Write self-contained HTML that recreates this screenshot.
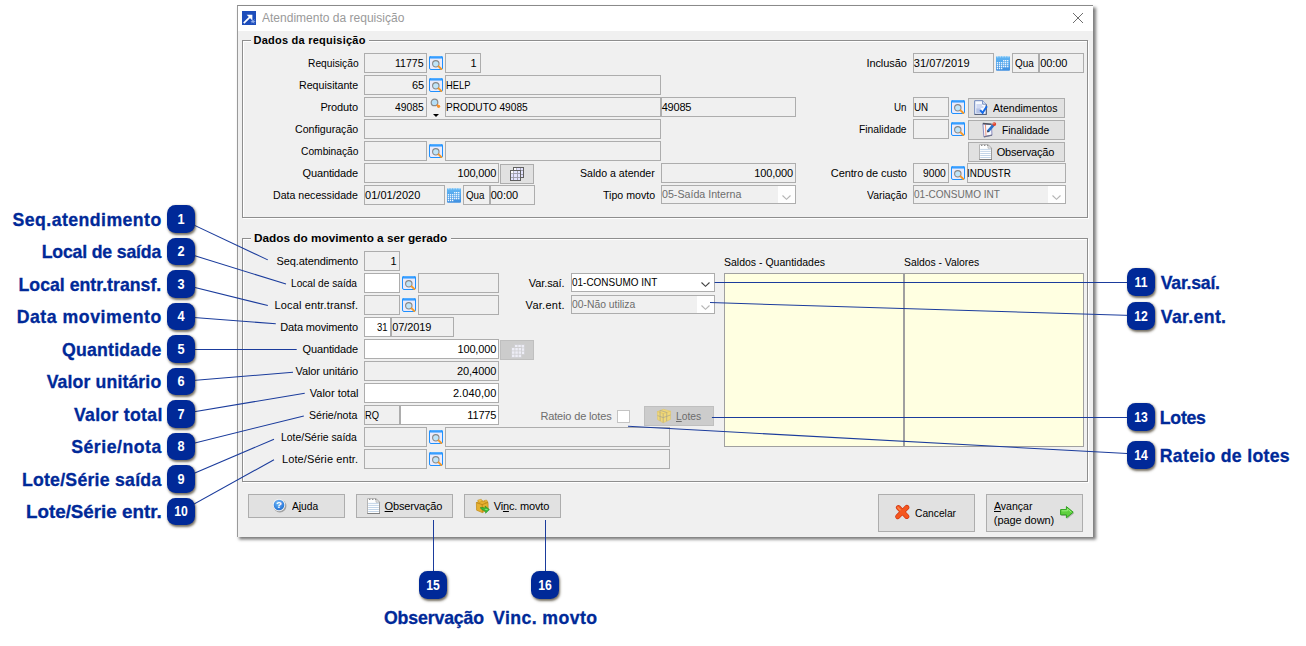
<!DOCTYPE html>
<html lang="pt-BR"><head><meta charset="utf-8"><title>Atendimento da requisição</title>
<style>
html,body{margin:0;padding:0;}
body{width:1306px;height:646px;position:relative;overflow:hidden;background:#fff;font-family:"Liberation Sans", sans-serif;font-size:11px;color:#000;}
.b{position:absolute;box-sizing:border-box;}
.t{position:absolute;white-space:pre;}
svg{position:absolute;overflow:visible;}
u{text-decoration:underline;text-decoration-skip-ink:none;text-underline-offset:1px;}
</style></head>
<body>
<div class="b" style="left:237px;top:5px;width:856px;height:532px;background:#f0f0f0;border-top:1px solid #8a8a8a;border-left:1px solid #9a9a9a;box-shadow:2.5px 2px 3px 0.5px rgba(0,0,0,0.52);"></div>
<div class="b" style="left:238px;top:6px;width:855px;height:25px;background:#fff;"></div>
<svg style="left:242px;top:11px" width="14" height="14" viewBox="0 0 14 14"><rect width="14" height="14" fill="#1d4dbb"/><path d="M1.8 12.2 L8.6 5.4" stroke="#fff" stroke-width="1.7"/><path d="M4.6 3.8 H10.4 V9.6 Z" fill="#fff"/><path d="M9.6 8.4l2.6 4M12.4 8.6l-2.8 3.6M8.8 10.6h4.4" stroke="#9db7ee" stroke-width="0.8"/></svg>
<span class="t" style="top:8.3px;height:20px;line-height:20px;font-size:12.5px;color:#9a9a9a;transform:scaleX(0.9618);transform-origin:0 50%;left:262.2px;">Atendimento da requisição</span>
<svg style="left:1073px;top:13px" width="10" height="10" viewBox="0 0 10 10"><path d="M0 0 L10 10 M10 0 L0 10" stroke="#6e6e6e" stroke-width="1"/></svg>
<div class="b" style="left:242px;top:40px;width:846px;height:178px;border:1px solid #8e8e8e;box-shadow:inset 1px 1px 0 #fff, 1px 1px 0 #fff;"></div>
<div class="b" style="left:251px;top:34px;width:118.2px;height:14px;background:#f0f0f0;"></div>
<span class="t" style="top:29.6px;height:20px;line-height:20px;font-weight:bold;left:253.5px;letter-spacing:0.241px;">Dados da requisição</span>
<span class="t" style="top:53px;height:20px;line-height:20px;transform:scaleX(0.9300);transform-origin:0 50%;left:307.5px;">Requisição</span>
<div class="b" style="left:364px;top:53px;width:63px;height:20px;background:#f0f0f0;border:1px solid #adadad;"></div>
<span class="t" style="top:53px;height:20px;line-height:20px;transform:scaleX(0.9611);transform-origin:0 50%;left:395.4px;">11775</span>
<svg style="left:429px;top:56px" width="14" height="14" viewBox="0 0 14 14"><rect x="0.5" y="0.5" width="13" height="13" rx="1.5" fill="#ebebfa" stroke="#1e90ff"/><rect x="0.3" y="0" width="13.4" height="2.4" rx="1" fill="#2394ff"/><path d="M1.5 0.8h11" stroke="#7cc0ff" stroke-width="0.8"/><circle cx="6.8" cy="7.8" r="3.2" fill="#bfe4f8" stroke="#878787" stroke-width="1.1"/><path d="M9.6 10.4 L12.3 13" stroke="#f39a2b" stroke-width="2" stroke-linecap="round"/></svg>
<div class="b" style="left:445px;top:53px;width:36px;height:20px;background:#f0f0f0;border:1px solid #adadad;"></div>
<span class="t" style="top:53px;height:20px;line-height:20px;left:470.4px;">1</span>
<span class="t" style="top:53px;height:20px;line-height:20px;left:866.4px;letter-spacing:-0.065px;">Inclusão</span>
<div class="b" style="left:913px;top:53px;width:81px;height:20px;background:#f0f0f0;border:1px solid #adadad;"></div>
<span class="t" style="top:53px;height:20px;line-height:20px;left:913.7px;letter-spacing:0.096px;">31/07/2019</span>
<svg style="left:996px;top:56px" width="14" height="15" viewBox="0 0 14 15"><defs><linearGradient id="cg" x1="0" y1="0" x2="0" y2="1"><stop offset="0" stop-color="#63b8f5"/><stop offset="1" stop-color="#3f8fe0"/></linearGradient></defs><rect x="0" y="0.3" width="14" height="14.5" rx="1" fill="url(#cg)"/><path d="M1 0.8h1.4M3.6 0.8h1.4M6.2 0.8h1.4M8.8 0.8h1.4M11.4 0.8h1.4" stroke="#cfe9fb" stroke-width="1"/><rect x="7.1" y="4.0" width="1.3" height="1.3" fill="#fff" opacity="0.95"/><rect x="9.0" y="4.0" width="1.3" height="1.3" fill="#fff" opacity="0.95"/><rect x="11.1" y="4.0" width="1.3" height="1.3" fill="#fff" opacity="0.95"/><rect x="0.8" y="6.1" width="1.3" height="1.3" fill="#fff" opacity="0.95"/><rect x="2.9" y="6.1" width="1.3" height="1.3" fill="#fff" opacity="0.95"/><rect x="5.0" y="6.1" width="1.3" height="1.3" fill="#fff" opacity="0.95"/><rect x="7.1" y="6.1" width="1.3" height="1.3" fill="#fff" opacity="0.95"/><rect x="9.0" y="6.1" width="1.3" height="1.3" fill="#fff" opacity="0.95"/><rect x="11.1" y="6.1" width="1.3" height="1.3" fill="#fff" opacity="0.95"/><rect x="0.8" y="8.1" width="1.3" height="1.3" fill="#fff" opacity="0.95"/><rect x="2.9" y="8.1" width="1.3" height="1.3" fill="#fff" opacity="0.95"/><rect x="5.0" y="8.1" width="1.3" height="1.3" fill="#fff" opacity="0.95"/><rect x="7.1" y="8.1" width="1.3" height="1.3" fill="#fff" opacity="0.95"/><rect x="9.0" y="8.1" width="1.3" height="1.3" fill="#fff" opacity="0.95"/><rect x="11.1" y="8.1" width="1.3" height="1.3" fill="#fff" opacity="0.95"/><rect x="0.8" y="10.0" width="1.3" height="1.3" fill="#fff" opacity="0.95"/><rect x="2.9" y="10.0" width="1.3" height="1.3" fill="#fff" opacity="0.95"/><rect x="5.0" y="10.0" width="1.3" height="1.3" fill="#fff" opacity="0.95"/><rect x="7.1" y="10.0" width="1.3" height="1.3" fill="#fff" opacity="0.95"/><rect x="9.0" y="10.0" width="1.3" height="1.3" fill="#fff" opacity="0.95"/><rect x="11.1" y="10.0" width="1.3" height="1.3" fill="#fff" opacity="0.95"/><rect x="0.8" y="11.9" width="1.3" height="1.3" fill="#fff" opacity="0.95"/><rect x="2.9" y="11.9" width="1.3" height="1.3" fill="#fff" opacity="0.95"/><rect x="5.0" y="11.9" width="1.3" height="1.3" fill="#fff" opacity="0.95"/></svg>
<div class="b" style="left:1012px;top:53px;width:27px;height:20px;background:#f0f0f0;border:1px solid #adadad;"></div>
<span class="t" style="top:53px;height:20px;line-height:20px;transform:scaleX(0.9043);transform-origin:0 50%;left:1014.8px;">Qua</span>
<div class="b" style="left:1039px;top:53px;width:45px;height:20px;background:#f0f0f0;border:1px solid #adadad;"></div>
<span class="t" style="top:53px;height:20px;line-height:20px;left:1040.2px;letter-spacing:-0.077px;">00:00</span>
<span class="t" style="top:75px;height:20px;line-height:20px;transform:scaleX(0.9683);transform-origin:0 50%;left:298.9px;">Requisitante</span>
<div class="b" style="left:364px;top:75px;width:63px;height:20px;background:#f0f0f0;border:1px solid #adadad;"></div>
<span class="t" style="top:75px;height:20px;line-height:20px;left:412px;letter-spacing:-0.218px;">65</span>
<svg style="left:429px;top:78px" width="14" height="14" viewBox="0 0 14 14"><rect x="0.5" y="0.5" width="13" height="13" rx="1.5" fill="#ebebfa" stroke="#1e90ff"/><rect x="0.3" y="0" width="13.4" height="2.4" rx="1" fill="#2394ff"/><path d="M1.5 0.8h11" stroke="#7cc0ff" stroke-width="0.8"/><circle cx="6.8" cy="7.8" r="3.2" fill="#bfe4f8" stroke="#878787" stroke-width="1.1"/><path d="M9.6 10.4 L12.3 13" stroke="#f39a2b" stroke-width="2" stroke-linecap="round"/></svg>
<div class="b" style="left:445px;top:75px;width:216px;height:20px;background:#f0f0f0;border:1px solid #adadad;"></div>
<span class="t" style="top:75px;height:20px;line-height:20px;transform:scaleX(0.8522);transform-origin:0 50%;left:445.6px;">HELP</span>
<span class="t" style="top:97px;height:20px;line-height:20px;left:320.4px;letter-spacing:-0.135px;">Produto</span>
<div class="b" style="left:364px;top:97px;width:63px;height:20px;background:#f0f0f0;border:1px solid #adadad;"></div>
<span class="t" style="top:97px;height:20px;line-height:20px;transform:scaleX(0.9353);transform-origin:0 50%;left:395.4px;">49085</span>
<svg style="left:429px;top:96px" width="14" height="22" viewBox="0 0 14 22"><circle cx="5.5" cy="6.4" r="3.3" fill="#b4def6" stroke="#8a8a8a" stroke-width="1.2"/><path d="M7.8 8.7 L9.6 10.3" stroke="#f7902a" stroke-width="1.7"/><circle cx="9.6" cy="10.3" r="1.6" fill="#f7902a"/><path d="M4 18 L10 18 L7 21 Z" fill="#000"/></svg>
<div class="b" style="left:445px;top:97px;width:216px;height:20px;background:#f0f0f0;border:1px solid #adadad;"></div>
<span class="t" style="top:97px;height:20px;line-height:20px;transform:scaleX(0.9238);transform-origin:0 50%;left:445.6px;">PRODUTO 49085</span>
<div class="b" style="left:661px;top:97px;width:135px;height:20px;background:#f0f0f0;border:1px solid #adadad;"></div>
<span class="t" style="top:97px;height:20px;line-height:20px;left:661.7px;letter-spacing:-0.218px;">49085</span>
<span class="t" style="top:97px;height:20px;line-height:20px;transform:scaleX(0.8893);transform-origin:0 50%;left:894.4px;">Un</span>
<div class="b" style="left:913px;top:97px;width:36px;height:20px;background:#f0f0f0;border:1px solid #adadad;"></div>
<span class="t" style="top:97px;height:20px;line-height:20px;transform:scaleX(0.8906);transform-origin:0 50%;left:913.7px;">UN</span>
<svg style="left:951px;top:100px" width="14" height="14" viewBox="0 0 14 14"><rect x="0.5" y="0.5" width="13" height="13" rx="1.5" fill="#ebebfa" stroke="#1e90ff"/><rect x="0.3" y="0" width="13.4" height="2.4" rx="1" fill="#2394ff"/><path d="M1.5 0.8h11" stroke="#7cc0ff" stroke-width="0.8"/><circle cx="6.8" cy="7.8" r="3.2" fill="#bfe4f8" stroke="#878787" stroke-width="1.1"/><path d="M9.6 10.4 L12.3 13" stroke="#f39a2b" stroke-width="2" stroke-linecap="round"/></svg>
<div class="b" style="left:968px;top:98px;width:97px;height:20px;background:#e1e1e1;border:1px solid #adadad;"></div>
<svg style="left:974px;top:100px" width="14" height="15" viewBox="0 0 14 15"><path d="M0.7 0.7 H8.6 L12.2 4.2 V14.3 H0.7 Z" fill="#f7faff" stroke="#6a84bc" stroke-width="1"/><path d="M0.5 14.5 H12.6 M12.4 4.4 V14.6" stroke="#525c70" stroke-width="0.9"/><path d="M8.6 0.7 V4.2 H12.2" fill="#dfe8f8" stroke="#6a84bc" stroke-width="0.9"/><path d="M2.4 5h5.6M2.4 7h7" stroke="#9fb2e2" stroke-width="0.9"/><rect x="2.2" y="8.2" width="4.4" height="5" fill="#b4c2e6"/><path d="M6.2 10.2 L8.6 12.9 L12.9 6.3" fill="none" stroke="#166ae6" stroke-width="2"/></svg>
<span class="t" style="top:98px;height:20px;line-height:20px;transform:scaleX(0.9578);transform-origin:0 50%;left:993px;">Atendimentos</span>
<span class="t" style="top:119px;height:20px;line-height:20px;transform:scaleX(0.9661);transform-origin:0 50%;left:294.9px;">Configuração</span>
<div class="b" style="left:364px;top:119px;width:297px;height:20px;background:#f0f0f0;border:1px solid #adadad;"></div>
<span class="t" style="top:119px;height:20px;line-height:20px;transform:scaleX(0.9380);transform-origin:0 50%;left:859.3px;">Finalidade</span>
<div class="b" style="left:913px;top:119px;width:36px;height:20px;background:#f0f0f0;border:1px solid #adadad;"></div>
<svg style="left:951px;top:122px" width="14" height="14" viewBox="0 0 14 14"><rect x="0.5" y="0.5" width="13" height="13" rx="1.5" fill="#ebebfa" stroke="#1e90ff"/><rect x="0.3" y="0" width="13.4" height="2.4" rx="1" fill="#2394ff"/><path d="M1.5 0.8h11" stroke="#7cc0ff" stroke-width="0.8"/><circle cx="6.8" cy="7.8" r="3.2" fill="#bfe4f8" stroke="#878787" stroke-width="1.1"/><path d="M9.6 10.4 L12.3 13" stroke="#f39a2b" stroke-width="2" stroke-linecap="round"/></svg>
<div class="b" style="left:968px;top:120px;width:97px;height:20px;background:#e1e1e1;border:1px solid #adadad;"></div>
<svg style="left:982px;top:121.5px" width="15" height="16" viewBox="0 0 15 16"><path d="M0.9 1.9 L9.4 2.6 L10 13.2 L1.9 14.8 Z" fill="#f6f7fd" stroke="#8c8cc0" stroke-width="1"/><path d="M3.4 2.2 L4 14.2" stroke="#ee8a70" stroke-width="0.9"/><path d="M0.8 1.6 L9.6 2.3" stroke="#4e5260" stroke-width="1.5"/><path d="M1.9 14.8 L10 13.2" stroke="#70748c" stroke-width="1.2"/><path d="M6.4 8.8 L11.2 3.4" stroke="#2a72cc" stroke-width="2.7" stroke-linecap="round"/><path d="M5 10.4 L5.6 8.2 L7.4 9.6 Z" fill="#3c3c3c"/><circle cx="12.3" cy="2.1" r="1.9" fill="#e2432a"/><circle cx="11.9" cy="1.6" r="0.7" fill="#f69a84"/></svg>
<span class="t" style="top:120px;height:20px;line-height:20px;transform:scaleX(0.9281);transform-origin:0 50%;left:1001.7px;">Finalidade</span>
<span class="t" style="top:141px;height:20px;line-height:20px;transform:scaleX(0.9312);transform-origin:0 50%;left:300.6px;">Combinação</span>
<div class="b" style="left:364px;top:141px;width:63px;height:20px;background:#f0f0f0;border:1px solid #adadad;"></div>
<svg style="left:429px;top:144px" width="14" height="14" viewBox="0 0 14 14"><rect x="0.5" y="0.5" width="13" height="13" rx="1.5" fill="#ebebfa" stroke="#1e90ff"/><rect x="0.3" y="0" width="13.4" height="2.4" rx="1" fill="#2394ff"/><path d="M1.5 0.8h11" stroke="#7cc0ff" stroke-width="0.8"/><circle cx="6.8" cy="7.8" r="3.2" fill="#bfe4f8" stroke="#878787" stroke-width="1.1"/><path d="M9.6 10.4 L12.3 13" stroke="#f39a2b" stroke-width="2" stroke-linecap="round"/></svg>
<div class="b" style="left:445px;top:141px;width:216px;height:20px;background:#f0f0f0;border:1px solid #adadad;"></div>
<div class="b" style="left:968px;top:142px;width:97px;height:20px;background:#e1e1e1;border:1px solid #adadad;"></div>
<svg style="left:979px;top:143.7px" width="13" height="16" viewBox="0 0 13 16"><path d="M0.5 0.6 H9 L12.5 4.2 V15.5 H0.5 Z" fill="#fff" stroke="#b4b4b4"/><path d="M9 0.6 V4.2 H12.5 Z" fill="#ececec" stroke="#b0b0b0" stroke-width="0.8"/><path d="M12.5 4.2 V15.5" stroke="#9c9c9c"/><path d="M0.3 15.5 H13" stroke="#7e7e7e"/><path d="M2 1.3h1.4M5 1.3h1.4M8 1.3h1.2" stroke="#8e8e8e" stroke-width="1.3"/><path d="M1.2 5.4h10.6M1.2 7.4h10.6M1.2 9.5h10.6M1.2 11.5h10.6M1.2 13.5h10.6" stroke="#c3d5e8" stroke-width="1"/></svg>
<span class="t" style="top:142px;height:20px;line-height:20px;left:996.7px;letter-spacing:-0.188px;">Observação</span>
<span class="t" style="top:163px;height:20px;line-height:20px;left:302.6px;letter-spacing:-0.151px;">Quantidade</span>
<div class="b" style="left:364px;top:163px;width:135px;height:20px;background:#f0f0f0;border:1px solid #adadad;"></div>
<span class="t" style="top:163px;height:20px;line-height:20px;left:457.4px;letter-spacing:-0.124px;">100,000</span>
<div class="b" style="left:500px;top:164px;width:34px;height:20px;background:#e1e1e1;border:1px solid #adadad;"></div>
<svg style="left:510px;top:167px" width="14" height="14" viewBox="0 0 14 14"><rect x="3" y="0" width="11" height="11" fill="#e4e4ff"/><rect x="3.5" y="0.5" width="10" height="10" fill="none" stroke="#606060"/><path d="M6.5 1v9M10.5 1v9M4 3.5h9M4 7.5h9" stroke="#9a9aa8" stroke-width="0.9"/><rect x="4" y="1" width="2.2" height="2.2" fill="#fff"/><rect x="0" y="3" width="11" height="11" fill="#e4e4ff"/><rect x="0.5" y="3.5" width="10" height="10" fill="none" stroke="#606060"/><path d="M3.5 4v9M7.5 4v9M1 6.5h9M1 10.5h9" stroke="#9a9aa8" stroke-width="0.9"/><rect x="1" y="4" width="2.2" height="2.2" fill="#fff"/></svg>
<span class="t" style="top:163px;height:20px;line-height:20px;transform:scaleX(0.9627);transform-origin:0 50%;left:579.6px;">Saldo a atender</span>
<div class="b" style="left:661px;top:163px;width:135px;height:20px;background:#f0f0f0;border:1px solid #adadad;"></div>
<span class="t" style="top:163px;height:20px;line-height:20px;left:754.2px;letter-spacing:-0.124px;">100,000</span>
<span class="t" style="top:163px;height:20px;line-height:20px;left:830.8px;letter-spacing:-0.110px;">Centro de custo</span>
<div class="b" style="left:913px;top:163px;width:36px;height:20px;background:#f0f0f0;border:1px solid #adadad;"></div>
<span class="t" style="top:163px;height:20px;line-height:20px;transform:scaleX(0.9321);transform-origin:0 50%;left:923.2px;">9000</span>
<svg style="left:951px;top:166px" width="14" height="14" viewBox="0 0 14 14"><rect x="0.5" y="0.5" width="13" height="13" rx="1.5" fill="#ebebfa" stroke="#1e90ff"/><rect x="0.3" y="0" width="13.4" height="2.4" rx="1" fill="#2394ff"/><path d="M1.5 0.8h11" stroke="#7cc0ff" stroke-width="0.8"/><circle cx="6.8" cy="7.8" r="3.2" fill="#bfe4f8" stroke="#878787" stroke-width="1.1"/><path d="M9.6 10.4 L12.3 13" stroke="#f39a2b" stroke-width="2" stroke-linecap="round"/></svg>
<div class="b" style="left:967px;top:163px;width:99px;height:20px;background:#f0f0f0;border:1px solid #adadad;"></div>
<span class="t" style="top:163px;height:20px;line-height:20px;transform:scaleX(0.8990);transform-origin:0 50%;left:966.8px;">INDUSTR</span>
<span class="t" style="top:185px;height:20px;line-height:20px;transform:scaleX(0.9631);transform-origin:0 50%;left:273.3px;">Data necessidade</span>
<div class="b" style="left:364px;top:185px;width:81px;height:20px;background:#f0f0f0;border:1px solid #adadad;"></div>
<span class="t" style="top:185px;height:20px;line-height:20px;left:365px;letter-spacing:0.029px;">01/01/2020</span>
<svg style="left:447px;top:188px" width="14" height="15" viewBox="0 0 14 15"><rect x="0" y="0.3" width="14" height="14.5" rx="1" fill="url(#cg)"/><path d="M1 0.8h1.4M3.6 0.8h1.4M6.2 0.8h1.4M8.8 0.8h1.4M11.4 0.8h1.4" stroke="#cfe9fb" stroke-width="1"/><rect x="7.1" y="4.0" width="1.3" height="1.3" fill="#fff" opacity="0.95"/><rect x="9.0" y="4.0" width="1.3" height="1.3" fill="#fff" opacity="0.95"/><rect x="11.1" y="4.0" width="1.3" height="1.3" fill="#fff" opacity="0.95"/><rect x="0.8" y="6.1" width="1.3" height="1.3" fill="#fff" opacity="0.95"/><rect x="2.9" y="6.1" width="1.3" height="1.3" fill="#fff" opacity="0.95"/><rect x="5.0" y="6.1" width="1.3" height="1.3" fill="#fff" opacity="0.95"/><rect x="7.1" y="6.1" width="1.3" height="1.3" fill="#fff" opacity="0.95"/><rect x="9.0" y="6.1" width="1.3" height="1.3" fill="#fff" opacity="0.95"/><rect x="11.1" y="6.1" width="1.3" height="1.3" fill="#fff" opacity="0.95"/><rect x="0.8" y="8.1" width="1.3" height="1.3" fill="#fff" opacity="0.95"/><rect x="2.9" y="8.1" width="1.3" height="1.3" fill="#fff" opacity="0.95"/><rect x="5.0" y="8.1" width="1.3" height="1.3" fill="#fff" opacity="0.95"/><rect x="7.1" y="8.1" width="1.3" height="1.3" fill="#fff" opacity="0.95"/><rect x="9.0" y="8.1" width="1.3" height="1.3" fill="#fff" opacity="0.95"/><rect x="11.1" y="8.1" width="1.3" height="1.3" fill="#fff" opacity="0.95"/><rect x="0.8" y="10.0" width="1.3" height="1.3" fill="#fff" opacity="0.95"/><rect x="2.9" y="10.0" width="1.3" height="1.3" fill="#fff" opacity="0.95"/><rect x="5.0" y="10.0" width="1.3" height="1.3" fill="#fff" opacity="0.95"/><rect x="7.1" y="10.0" width="1.3" height="1.3" fill="#fff" opacity="0.95"/><rect x="9.0" y="10.0" width="1.3" height="1.3" fill="#fff" opacity="0.95"/><rect x="11.1" y="10.0" width="1.3" height="1.3" fill="#fff" opacity="0.95"/><rect x="0.8" y="11.9" width="1.3" height="1.3" fill="#fff" opacity="0.95"/><rect x="2.9" y="11.9" width="1.3" height="1.3" fill="#fff" opacity="0.95"/><rect x="5.0" y="11.9" width="1.3" height="1.3" fill="#fff" opacity="0.95"/></svg>
<div class="b" style="left:463px;top:185px;width:27px;height:20px;background:#f0f0f0;border:1px solid #adadad;"></div>
<span class="t" style="top:185px;height:20px;line-height:20px;transform:scaleX(0.8905);transform-origin:0 50%;left:465.8px;">Qua</span>
<div class="b" style="left:490px;top:185px;width:45px;height:20px;background:#f0f0f0;border:1px solid #adadad;"></div>
<span class="t" style="top:185px;height:20px;line-height:20px;left:490.8px;letter-spacing:-0.052px;">00:00</span>
<span class="t" style="top:185px;height:20px;line-height:20px;transform:scaleX(0.9650);transform-origin:0 50%;left:602.7px;">Tipo movto</span>
<div class="b" style="left:661px;top:185px;width:135px;height:19px;background:#f0f0f0;border:1px solid #adadad;"></div>
<div class="b" style="left:778px;top:186px;width:17px;height:17px;background:#fefefe;"></div>
<span class="t" style="top:184.2px;height:20px;line-height:20px;color:#6d6d6d;transform:scaleX(0.9683);transform-origin:0 50%;left:661.9px;">05-Saída Interna</span>
<svg style="left:782.2px;top:194.6px" width="9" height="5" viewBox="0 0 9 5"><path d="M0.5 0.5 L4.5 4.3 L8.5 0.5" fill="none" stroke="#b4b4b4" stroke-width="1.1"/></svg>
<span class="t" style="top:185px;height:20px;line-height:20px;transform:scaleX(0.9440);transform-origin:0 50%;left:866.7px;">Variação</span>
<div class="b" style="left:913px;top:185px;width:153px;height:19px;background:#f0f0f0;border:1px solid #adadad;"></div>
<div class="b" style="left:1048px;top:186px;width:17px;height:17px;background:#fefefe;"></div>
<span class="t" style="top:184.2px;height:20px;line-height:20px;color:#6d6d6d;transform:scaleX(0.9132);transform-origin:0 50%;left:913.7px;">01-CONSUMO INT</span>
<svg style="left:1052.2px;top:194.6px" width="9" height="5" viewBox="0 0 9 5"><path d="M0.5 0.5 L4.5 4.3 L8.5 0.5" fill="none" stroke="#b4b4b4" stroke-width="1.1"/></svg>
<div class="b" style="left:242px;top:238px;width:846px;height:244px;border:1px solid #8e8e8e;box-shadow:inset 1px 1px 0 #fff, 1px 1px 0 #fff;"></div>
<div class="b" style="left:251px;top:232px;width:199.5px;height:14px;background:#f0f0f0;"></div>
<span class="t" style="top:227.6px;height:20px;line-height:20px;font-weight:bold;transform:scaleX(1.0714);transform-origin:0 50%;left:253.5px;">Dados do movimento a ser gerado</span>
<span class="t" style="top:251px;height:20px;line-height:20px;left:276.6px;letter-spacing:-0.118px;">Seq.atendimento</span>
<div class="b" style="left:364px;top:251px;width:36px;height:20px;background:#f0f0f0;border:1px solid #adadad;"></div>
<span class="t" style="top:251px;height:20px;line-height:20px;left:390.4px;">1</span>
<span class="t" style="top:273px;height:20px;line-height:20px;transform:scaleX(0.9222);transform-origin:0 50%;left:291.2px;">Local de saída</span>
<div class="b" style="left:364px;top:273px;width:36px;height:20px;background:#fff;border:1px solid #adadad;"></div>
<svg style="left:402px;top:276px" width="14" height="14" viewBox="0 0 14 14"><rect x="0.5" y="0.5" width="13" height="13" rx="1.5" fill="#ebebfa" stroke="#1e90ff"/><rect x="0.3" y="0" width="13.4" height="2.4" rx="1" fill="#2394ff"/><path d="M1.5 0.8h11" stroke="#7cc0ff" stroke-width="0.8"/><circle cx="6.8" cy="7.8" r="3.2" fill="#bfe4f8" stroke="#878787" stroke-width="1.1"/><path d="M9.6 10.4 L12.3 13" stroke="#f39a2b" stroke-width="2" stroke-linecap="round"/></svg>
<div class="b" style="left:418px;top:273px;width:81px;height:20px;background:#f0f0f0;border:1px solid #adadad;"></div>
<span class="t" style="top:273px;height:20px;line-height:20px;left:528.8px;letter-spacing:-0.103px;">Var.saí.</span>
<div class="b" style="left:571px;top:273px;width:144px;height:19px;background:#fff;border:1px solid #adadad;"></div>
<span class="t" style="top:272.2px;height:20px;line-height:20px;transform:scaleX(0.9057);transform-origin:0 50%;left:572.4px;">01-CONSUMO INT</span>
<svg style="left:700.6px;top:282.3px" width="9" height="5" viewBox="0 0 9 5"><path d="M0.5 0.5 L4.5 4.3 L8.5 0.5" fill="none" stroke="#404040" stroke-width="1.1"/></svg>
<span class="t" style="top:295px;height:20px;line-height:20px;left:274.6px;letter-spacing:0.125px;">Local entr.transf.</span>
<div class="b" style="left:364px;top:295px;width:36px;height:20px;background:#f0f0f0;border:1px solid #adadad;"></div>
<svg style="left:402px;top:298px" width="14" height="14" viewBox="0 0 14 14"><rect x="0.5" y="0.5" width="13" height="13" rx="1.5" fill="#ebebfa" stroke="#1e90ff"/><rect x="0.3" y="0" width="13.4" height="2.4" rx="1" fill="#2394ff"/><path d="M1.5 0.8h11" stroke="#7cc0ff" stroke-width="0.8"/><circle cx="6.8" cy="7.8" r="3.2" fill="#bfe4f8" stroke="#878787" stroke-width="1.1"/><path d="M9.6 10.4 L12.3 13" stroke="#f39a2b" stroke-width="2" stroke-linecap="round"/></svg>
<div class="b" style="left:418px;top:295px;width:81px;height:20px;background:#f0f0f0;border:1px solid #adadad;"></div>
<span class="t" style="top:295px;height:20px;line-height:20px;left:525.6px;letter-spacing:0.265px;">Var.ent.</span>
<div class="b" style="left:571px;top:295px;width:144px;height:19px;background:#f0f0f0;border:1px solid #adadad;"></div>
<div class="b" style="left:697px;top:296px;width:17px;height:17px;background:#fefefe;"></div>
<span class="t" style="top:294.2px;height:20px;line-height:20px;color:#6d6d6d;transform:scaleX(0.9407);transform-origin:0 50%;left:572.1px;">00-Não utiliza</span>
<svg style="left:701.2px;top:304.6px" width="9" height="5" viewBox="0 0 9 5"><path d="M0.5 0.5 L4.5 4.3 L8.5 0.5" fill="none" stroke="#b4b4b4" stroke-width="1.1"/></svg>
<span class="t" style="top:317px;height:20px;line-height:20px;left:280.3px;letter-spacing:-0.175px;">Data movimento</span>
<div class="b" style="left:364px;top:317px;width:27px;height:20px;background:#fff;border:1px solid #adadad;"></div>
<span class="t" style="top:317px;height:20px;line-height:20px;transform:scaleX(0.8665);transform-origin:0 50%;left:376.7px;">31</span>
<div class="b" style="left:391px;top:317px;width:63px;height:20px;background:#f0f0f0;border:1px solid #adadad;"></div>
<span class="t" style="top:317px;height:20px;line-height:20px;left:392.2px;letter-spacing:-0.107px;">07/2019</span>
<span class="t" style="top:339px;height:20px;line-height:20px;left:302.6px;letter-spacing:-0.151px;">Quantidade</span>
<div class="b" style="left:364px;top:339px;width:135px;height:20px;background:#fff;border:1px solid #adadad;"></div>
<span class="t" style="top:339px;height:20px;line-height:20px;left:457.4px;letter-spacing:-0.124px;">100,000</span>
<div class="b" style="left:500px;top:340px;width:34px;height:20px;background:#cccccc;border:1px solid #bfbfbf;"></div>
<svg style="left:510.5px;top:343.5px" width="14" height="14" viewBox="0 0 14 14"><rect x="3" y="0" width="11" height="11" fill="#cfcfd2"/><rect x="4.0" y="1.0" width="2.5" height="2.5" fill="#ededf6"/><rect x="7.3" y="1.0" width="2.5" height="2.5" fill="#ededf6"/><rect x="10.6" y="1.0" width="2.5" height="2.5" fill="#ededf6"/><rect x="4.0" y="4.3" width="2.5" height="2.5" fill="#ededf6"/><rect x="7.3" y="4.3" width="2.5" height="2.5" fill="#ededf6"/><rect x="10.6" y="4.3" width="2.5" height="2.5" fill="#ededf6"/><rect x="4.0" y="7.6" width="2.5" height="2.5" fill="#ededf6"/><rect x="7.3" y="7.6" width="2.5" height="2.5" fill="#ededf6"/><rect x="10.6" y="7.6" width="2.5" height="2.5" fill="#ededf6"/><rect x="0" y="3" width="11" height="11" fill="#cfcfd2"/><rect x="1.0" y="4.0" width="2.5" height="2.5" fill="#ededf6"/><rect x="4.3" y="4.0" width="2.5" height="2.5" fill="#ededf6"/><rect x="7.6" y="4.0" width="2.5" height="2.5" fill="#ededf6"/><rect x="1.0" y="7.3" width="2.5" height="2.5" fill="#ededf6"/><rect x="4.3" y="7.3" width="2.5" height="2.5" fill="#ededf6"/><rect x="7.6" y="7.3" width="2.5" height="2.5" fill="#ededf6"/><rect x="1.0" y="10.6" width="2.5" height="2.5" fill="#ededf6"/><rect x="4.3" y="10.6" width="2.5" height="2.5" fill="#ededf6"/><rect x="7.6" y="10.6" width="2.5" height="2.5" fill="#ededf6"/></svg>
<span class="t" style="top:361px;height:20px;line-height:20px;left:295.6px;letter-spacing:-0.114px;">Valor unitário</span>
<div class="b" style="left:364px;top:361px;width:135px;height:20px;background:#f0f0f0;border:1px solid #adadad;"></div>
<span class="t" style="top:361px;height:20px;line-height:20px;left:456.9px;letter-spacing:-0.041px;">20,4000</span>
<span class="t" style="top:383px;height:20px;line-height:20px;left:309.8px;letter-spacing:-0.007px;">Valor total</span>
<div class="b" style="left:364px;top:383px;width:135px;height:20px;background:#fff;border:1px solid #adadad;"></div>
<span class="t" style="top:383px;height:20px;line-height:20px;left:452.9px;letter-spacing:0.100px;">2.040,00</span>
<span class="t" style="top:405px;height:20px;line-height:20px;transform:scaleX(0.9642);transform-origin:0 50%;left:308.8px;">Série/nota</span>
<div class="b" style="left:364px;top:405px;width:36px;height:20px;background:#f0f0f0;border:1px solid #adadad;"></div>
<span class="t" style="top:405px;height:20px;line-height:20px;transform:scaleX(0.8499);transform-origin:0 50%;left:365px;">RQ</span>
<div class="b" style="left:400px;top:405px;width:99px;height:20px;background:#fff;border:1px solid #adadad;"></div>
<span class="t" style="top:405px;height:20px;line-height:20px;left:467.3px;letter-spacing:-0.164px;">11775</span>
<span class="t" style="top:406px;height:20px;line-height:20px;color:#6d6d6d;left:540.4px;letter-spacing:-0.149px;">Rateio de lotes</span>
<div class="b" style="left:617px;top:410px;width:13px;height:13px;background:#fff;border:1px solid #c4c4c4;"></div>
<div class="b" style="left:644px;top:406px;width:70px;height:20px;background:#cccccc;border:1px solid #bfbfbf;"></div>
<svg style="left:657px;top:409px" width="14" height="14" viewBox="0 0 14 14"><path d="M0.4 2.6 L6.4 0.2 L13.6 2.2 L13.4 10.4 L6.2 13.8 L0.6 10.6 Z" fill="#f0d878" stroke="#e0c66a" stroke-width="0.6"/><path d="M0.4 2.6 L6.2 4.6 L13.6 2.2" fill="none" stroke="#dcc060" stroke-width="0.6"/><path d="M3 1.6 L3.2 12 M9.8 3.4 L9.6 12.2 M3.2 1.4 L9.8 3.4 M0.6 6.6 L6.2 8.6 L13.4 6 M6.2 4.6 V13.6" fill="none" stroke="#a8a48c" stroke-width="0.7"/></svg>
<span class="t" style="top:406px;height:20px;line-height:20px;color:#6d6d6d;transform:scaleX(0.9376);transform-origin:0 50%;left:675.5px;"><u>L</u>otes</span>
<span class="t" style="top:427px;height:20px;line-height:20px;transform:scaleX(0.9470);transform-origin:0 50%;left:281.3px;">Lote/Série saída</span>
<div class="b" style="left:364px;top:427px;width:63px;height:20px;background:#f0f0f0;border:1px solid #adadad;"></div>
<svg style="left:429px;top:430px" width="14" height="14" viewBox="0 0 14 14"><rect x="0.5" y="0.5" width="13" height="13" rx="1.5" fill="#ebebfa" stroke="#1e90ff"/><rect x="0.3" y="0" width="13.4" height="2.4" rx="1" fill="#2394ff"/><path d="M1.5 0.8h11" stroke="#7cc0ff" stroke-width="0.8"/><circle cx="6.8" cy="7.8" r="3.2" fill="#bfe4f8" stroke="#878787" stroke-width="1.1"/><path d="M9.6 10.4 L12.3 13" stroke="#f39a2b" stroke-width="2" stroke-linecap="round"/></svg>
<div class="b" style="left:445px;top:427px;width:225px;height:20px;background:#f0f0f0;border:1px solid #adadad;"></div>
<span class="t" style="top:449px;height:20px;line-height:20px;left:282px;letter-spacing:0.097px;">Lote/Série entr.</span>
<div class="b" style="left:364px;top:449px;width:63px;height:20px;background:#f0f0f0;border:1px solid #adadad;"></div>
<svg style="left:429px;top:452px" width="14" height="14" viewBox="0 0 14 14"><rect x="0.5" y="0.5" width="13" height="13" rx="1.5" fill="#ebebfa" stroke="#1e90ff"/><rect x="0.3" y="0" width="13.4" height="2.4" rx="1" fill="#2394ff"/><path d="M1.5 0.8h11" stroke="#7cc0ff" stroke-width="0.8"/><circle cx="6.8" cy="7.8" r="3.2" fill="#bfe4f8" stroke="#878787" stroke-width="1.1"/><path d="M9.6 10.4 L12.3 13" stroke="#f39a2b" stroke-width="2" stroke-linecap="round"/></svg>
<div class="b" style="left:445px;top:449px;width:225px;height:20px;background:#f0f0f0;border:1px solid #adadad;"></div>
<span class="t" style="top:252px;height:20px;line-height:20px;transform:scaleX(0.9549);transform-origin:0 50%;left:723.8px;">Saldos - Quantidades</span>
<span class="t" style="top:252px;height:20px;line-height:20px;transform:scaleX(0.9404);transform-origin:0 50%;left:903.8px;">Saldos - Valores</span>
<div class="b" style="left:724px;top:273px;width:180px;height:174px;background:#ffffe1;border:1px solid #a0a0a0;"></div>
<div class="b" style="left:904px;top:273px;width:180px;height:174px;background:#ffffe1;border:1px solid #a0a0a0;"></div>
<div class="b" style="left:248px;top:494px;width:97px;height:24px;background:#e1e1e1;border:1px solid #adadad;"></div>
<svg style="left:271px;top:497.2px" width="17" height="17" viewBox="0 0 17 17"><defs><radialGradient id="hg" cx="0.42" cy="0.3" r="0.8"><stop offset="0" stop-color="#7fbaf6"/><stop offset="0.55" stop-color="#3b8be2"/><stop offset="1" stop-color="#2067c8"/></radialGradient></defs><circle cx="8.9" cy="9" r="6.5" fill="#6e6e6e" opacity="0.55"/><circle cx="8" cy="8" r="6.2" fill="#f2f2f2"/><circle cx="8" cy="8" r="5.3" fill="url(#hg)"/><text x="8" y="11.4" font-family="Liberation Sans, sans-serif" font-weight="bold" font-size="9.6" fill="#fff" text-anchor="middle">?</text></svg>
<span class="t" style="top:496px;height:20px;line-height:20px;transform:scaleX(0.9305);transform-origin:0 50%;left:292px;">A<u>j</u>uda</span>
<div class="b" style="left:356px;top:494px;width:97px;height:24px;background:#e1e1e1;border:1px solid #adadad;"></div>
<svg style="left:367px;top:498px" width="13" height="16" viewBox="0 0 13 16"><path d="M0.5 0.6 H9 L12.5 4.2 V15.5 H0.5 Z" fill="#fff" stroke="#b4b4b4"/><path d="M9 0.6 V4.2 H12.5 Z" fill="#ececec" stroke="#b0b0b0" stroke-width="0.8"/><path d="M12.5 4.2 V15.5" stroke="#9c9c9c"/><path d="M0.3 15.5 H13" stroke="#7e7e7e"/><path d="M2 1.3h1.4M5 1.3h1.4M8 1.3h1.2" stroke="#8e8e8e" stroke-width="1.3"/><path d="M1.2 5.4h10.6M1.2 7.4h10.6M1.2 9.5h10.6M1.2 11.5h10.6M1.2 13.5h10.6" stroke="#c3d5e8" stroke-width="1"/></svg>
<span class="t" style="top:496px;height:20px;line-height:20px;left:384.6px;letter-spacing:-0.177px;"><u>O</u>bservação</span>
<div class="b" style="left:464px;top:494px;width:97px;height:24px;background:#e1e1e1;border:1px solid #adadad;"></div>
<svg style="left:476px;top:499px" width="14" height="15" viewBox="0 0 14 15"><path d="M0.4 3.6 L5 1.6 L12 3.4 L12.2 10.4 L6.4 13.6 L0.6 11.2 Z" fill="#e6b030" stroke="#c08a14" stroke-width="0.7"/><path d="M0.4 3.6 L6.2 5.6 L12 3.4 M6.2 5.6 L6.4 13.6" fill="none" stroke="#b88212" stroke-width="0.8"/><path d="M1.6 1.2 L5.2 0.2 L6.4 2.2 L3 3.4 Z M8 1.6 L10.6 1 L11.8 2.8 L9 3 Z" fill="#f0c24a" stroke="#c08a14" stroke-width="0.5"/><path d="M4.2 8.8 C6 8.2 8 8.6 9.4 9.4 L9.2 7.2 L13.4 10.6 L9.6 14.2 L9.6 12.2 C8 11.8 6.2 11 4.2 8.8 Z" fill="#3cbc38" stroke="#1c8a20" stroke-width="0.6" stroke-linejoin="round"/><path d="M8.8 10.2 L11.6 10.6" stroke="#8ee87c" stroke-width="1"/></svg>
<span class="t" style="top:496px;height:20px;line-height:20px;left:493.7px;letter-spacing:-0.165px;">Vi<u>n</u>c. movto</span>
<div class="b" style="left:878px;top:494px;width:97px;height:38px;background:#e1e1e1;border:1px solid #adadad;"></div>
<svg style="left:895px;top:505px" width="15" height="14" viewBox="0 0 15 14"><path d="M3.4 2.6 L11.8 11.4 M11.8 2.4 L2.8 11.6" stroke="#cf3512" stroke-width="5" stroke-linecap="round"/><path d="M3.4 2.6 L11.8 11.4 M11.8 2.4 L2.8 11.6" stroke="#f4561f" stroke-width="3.7" stroke-linecap="round"/><path d="M3 2.6 L5 4.8" stroke="#f98a50" stroke-width="1.4" stroke-linecap="round"/></svg>
<span class="t" style="top:503px;height:20px;line-height:20px;transform:scaleX(0.9311);transform-origin:0 50%;left:914.6px;">Cancelar</span>
<div class="b" style="left:986px;top:494px;width:97px;height:38px;background:#e1e1e1;border:1px solid #adadad;"></div>
<svg style="left:1060px;top:506px" width="14" height="13" viewBox="0 0 14 13"><path d="M1.3 4.9 L7.3 4.9 L7.3 1.4 L14.2 7.2 L7.3 13 L7.3 10 L1.3 10 Z" fill="#555" opacity="0.35"/><path d="M0.6 3.6 H6.4 V0.6 L13.2 6.2 L6.4 11.8 V8.8 H0.6 Z" fill="#5fd03e" stroke="#2fa21e" stroke-width="1" stroke-linejoin="round"/><path d="M1.6 4.8 H7.4 V2.8 L11.4 6.2" fill="none" stroke="#98f07c" stroke-width="1"/></svg>
<span class="t" style="top:496px;height:20px;line-height:20px;transform:scaleX(0.9582);transform-origin:0 50%;left:993.8px;"><u>A</u>vançar</span>
<span class="t" style="top:509.7px;height:20px;line-height:20px;left:993.8px;letter-spacing:-0.069px;">(page down)</span>
<svg style="left:0;top:0" width="1306" height="646"><g stroke="#1b3c9c" stroke-width="1.05"><line x1="180.8" y1="218.9" x2="267.8" y2="259.9"/><line x1="180.8" y1="251.4" x2="286" y2="284"/><line x1="180.8" y1="283.9" x2="267.8" y2="305.6"/><line x1="180.8" y1="316.4" x2="275.8" y2="323.8"/><line x1="180.8" y1="349.5" x2="296.7" y2="349.5"/><line x1="180.8" y1="381.4" x2="293" y2="372.3"/><line x1="180.8" y1="413.9" x2="304.7" y2="393.3"/><line x1="180.8" y1="446.4" x2="303.8" y2="416"/><line x1="180.8" y1="478.9" x2="274" y2="439.2"/><line x1="180.8" y1="511.4" x2="274" y2="459.7"/><line x1="714.6" y1="282.5" x2="1141" y2="282.5"/><line x1="710" y1="302.6" x2="1141" y2="315.8"/><line x1="711.9" y1="417.5" x2="1141" y2="417.5"/><line x1="628" y1="426.3" x2="1141" y2="454.3"/><line x1="433.5" y1="520" x2="433.5" y2="585"/><line x1="545.5" y1="520" x2="545.5" y2="585"/></g></svg>
<div class="b" style="left:166.8px;top:205.2px;width:28px;height:27.6px;border-radius:8.5px;background:#002998;box-shadow:1px 1.5px 2.5px rgba(40,30,10,0.65);"></div>
<span class="t" style="top:204.8px;height:28px;line-height:28px;font-size:14px;color:#fff;font-weight:bold;left:81px;width:200px;text-align:center;transform:scale(0.91,1.04);">1</span>
<span class="t" style="top:205.9px;height:28px;line-height:28px;font-size:17.7px;color:#002998;font-weight:bold;left:12.6px;letter-spacing:0.436px;-webkit-text-stroke:0.3px #002998;">Seq.atendimento</span>
<div class="b" style="left:166.8px;top:237.7px;width:28px;height:27.6px;border-radius:8.5px;background:#002998;box-shadow:1px 1.5px 2.5px rgba(40,30,10,0.65);"></div>
<span class="t" style="top:237.3px;height:28px;line-height:28px;font-size:14px;color:#fff;font-weight:bold;left:81px;width:200px;text-align:center;transform:scale(0.91,1.04);">2</span>
<span class="t" style="top:238.4px;height:28px;line-height:28px;font-size:17.7px;color:#002998;font-weight:bold;left:41.7px;letter-spacing:-0.181px;-webkit-text-stroke:0.3px #002998;">Local de saída</span>
<div class="b" style="left:166.8px;top:270.2px;width:28px;height:27.6px;border-radius:8.5px;background:#002998;box-shadow:1px 1.5px 2.5px rgba(40,30,10,0.65);"></div>
<span class="t" style="top:269.8px;height:28px;line-height:28px;font-size:14px;color:#fff;font-weight:bold;left:81px;width:200px;text-align:center;transform:scale(0.91,1.04);">3</span>
<span class="t" style="top:270.9px;height:28px;line-height:28px;font-size:17.7px;color:#002998;font-weight:bold;left:18.5px;letter-spacing:0.012px;-webkit-text-stroke:0.3px #002998;">Local entr.transf.</span>
<div class="b" style="left:166.8px;top:302.7px;width:28px;height:27.6px;border-radius:8.5px;background:#002998;box-shadow:1px 1.5px 2.5px rgba(40,30,10,0.65);"></div>
<span class="t" style="top:302.3px;height:28px;line-height:28px;font-size:14px;color:#fff;font-weight:bold;left:81px;width:200px;text-align:center;transform:scale(0.91,1.04);">4</span>
<span class="t" style="top:303.4px;height:28px;line-height:28px;font-size:17.7px;color:#002998;font-weight:bold;left:16.7px;letter-spacing:0.531px;-webkit-text-stroke:0.3px #002998;">Data movimento</span>
<div class="b" style="left:166.8px;top:335.2px;width:28px;height:27.6px;border-radius:8.5px;background:#002998;box-shadow:1px 1.5px 2.5px rgba(40,30,10,0.65);"></div>
<span class="t" style="top:334.8px;height:28px;line-height:28px;font-size:14px;color:#fff;font-weight:bold;left:81px;width:200px;text-align:center;transform:scale(0.91,1.04);">5</span>
<span class="t" style="top:335.9px;height:28px;line-height:28px;font-size:17.7px;color:#002998;font-weight:bold;left:62px;letter-spacing:0.216px;-webkit-text-stroke:0.3px #002998;">Quantidade</span>
<div class="b" style="left:166.8px;top:367.7px;width:28px;height:27.6px;border-radius:8.5px;background:#002998;box-shadow:1px 1.5px 2.5px rgba(40,30,10,0.65);"></div>
<span class="t" style="top:367.3px;height:28px;line-height:28px;font-size:14px;color:#fff;font-weight:bold;left:81px;width:200px;text-align:center;transform:scale(0.91,1.04);">6</span>
<span class="t" style="top:368.4px;height:28px;line-height:28px;font-size:17.7px;color:#002998;font-weight:bold;left:46.7px;letter-spacing:0.114px;-webkit-text-stroke:0.3px #002998;">Valor unitário</span>
<div class="b" style="left:166.8px;top:400.2px;width:28px;height:27.6px;border-radius:8.5px;background:#002998;box-shadow:1px 1.5px 2.5px rgba(40,30,10,0.65);"></div>
<span class="t" style="top:399.8px;height:28px;line-height:28px;font-size:14px;color:#fff;font-weight:bold;left:81px;width:200px;text-align:center;transform:scale(0.91,1.04);">7</span>
<span class="t" style="top:400.9px;height:28px;line-height:28px;font-size:17.7px;color:#002998;font-weight:bold;left:73.9px;letter-spacing:0.291px;-webkit-text-stroke:0.3px #002998;">Valor total</span>
<div class="b" style="left:166.8px;top:432.7px;width:28px;height:27.6px;border-radius:8.5px;background:#002998;box-shadow:1px 1.5px 2.5px rgba(40,30,10,0.65);"></div>
<span class="t" style="top:432.3px;height:28px;line-height:28px;font-size:14px;color:#fff;font-weight:bold;left:81px;width:200px;text-align:center;transform:scale(0.91,1.04);">8</span>
<span class="t" style="top:433.4px;height:28px;line-height:28px;font-size:17.7px;color:#002998;font-weight:bold;left:71.2px;letter-spacing:0.502px;-webkit-text-stroke:0.3px #002998;">Série/nota</span>
<div class="b" style="left:166.8px;top:465.2px;width:28px;height:27.6px;border-radius:8.5px;background:#002998;box-shadow:1px 1.5px 2.5px rgba(40,30,10,0.65);"></div>
<span class="t" style="top:464.8px;height:28px;line-height:28px;font-size:14px;color:#fff;font-weight:bold;left:81px;width:200px;text-align:center;transform:scale(0.91,1.04);">9</span>
<span class="t" style="top:465.9px;height:28px;line-height:28px;font-size:17.7px;color:#002998;font-weight:bold;left:21.9px;letter-spacing:0.245px;-webkit-text-stroke:0.3px #002998;">Lote/Série saída</span>
<div class="b" style="left:166.8px;top:497.7px;width:28px;height:27.6px;border-radius:8.5px;background:#002998;box-shadow:1px 1.5px 2.5px rgba(40,30,10,0.65);"></div>
<span class="t" style="top:497.3px;height:28px;line-height:28px;font-size:14px;color:#fff;font-weight:bold;left:81px;width:200px;text-align:center;transform:scale(0.87,1.04);">10</span>
<span class="t" style="top:498.4px;height:28px;line-height:28px;font-size:17.7px;color:#002998;font-weight:bold;transform:scaleX(1.0614);transform-origin:0 50%;left:25.64px;-webkit-text-stroke:0.3px #002998;">Lote/Série entr.</span>
<div class="b" style="left:1126.8px;top:268.1px;width:28px;height:27.6px;border-radius:8.5px;background:#002998;box-shadow:1px 1.5px 2.5px rgba(40,30,10,0.65);"></div>
<span class="t" style="top:267.7px;height:28px;line-height:28px;font-size:14px;color:#fff;font-weight:bold;left:1041px;width:200px;text-align:center;transform:scale(0.87,1.04);">11</span>
<span class="t" style="top:268.8px;height:28px;line-height:28px;font-size:17.7px;color:#002998;font-weight:bold;left:1160.8px;letter-spacing:-0.252px;-webkit-text-stroke:0.3px #002998;">Var.saí.</span>
<div class="b" style="left:1126.8px;top:302px;width:28px;height:27.6px;border-radius:8.5px;background:#002998;box-shadow:1px 1.5px 2.5px rgba(40,30,10,0.65);"></div>
<span class="t" style="top:301.6px;height:28px;line-height:28px;font-size:14px;color:#fff;font-weight:bold;left:1041px;width:200px;text-align:center;transform:scale(0.87,1.04);">12</span>
<span class="t" style="top:302.7px;height:28px;line-height:28px;font-size:17.7px;color:#002998;font-weight:bold;left:1160.8px;letter-spacing:0.327px;-webkit-text-stroke:0.3px #002998;">Var.ent.</span>
<div class="b" style="left:1126.8px;top:403.1px;width:28px;height:27.6px;border-radius:8.5px;background:#002998;box-shadow:1px 1.5px 2.5px rgba(40,30,10,0.65);"></div>
<span class="t" style="top:402.7px;height:28px;line-height:28px;font-size:14px;color:#fff;font-weight:bold;left:1041px;width:200px;text-align:center;transform:scale(0.87,1.04);">13</span>
<span class="t" style="top:403.8px;height:28px;line-height:28px;font-size:17.7px;color:#002998;font-weight:bold;left:1159.8px;letter-spacing:-0.259px;-webkit-text-stroke:0.3px #002998;">Lotes</span>
<div class="b" style="left:1126.8px;top:441.2px;width:28px;height:27.6px;border-radius:8.5px;background:#002998;box-shadow:1px 1.5px 2.5px rgba(40,30,10,0.65);"></div>
<span class="t" style="top:440.8px;height:28px;line-height:28px;font-size:14px;color:#fff;font-weight:bold;left:1041px;width:200px;text-align:center;transform:scale(0.87,1.04);">14</span>
<span class="t" style="top:441.9px;height:28px;line-height:28px;font-size:17.7px;color:#002998;font-weight:bold;left:1159.8px;letter-spacing:0.288px;-webkit-text-stroke:0.3px #002998;">Rateio de lotes</span>
<div class="b" style="left:419px;top:571.3px;width:28px;height:27.6px;border-radius:8.5px;background:#002998;box-shadow:1px 1.5px 2.5px rgba(40,30,10,0.65);"></div>
<span class="t" style="top:570.9px;height:28px;line-height:28px;font-size:14px;color:#fff;font-weight:bold;left:333.2px;width:200px;text-align:center;transform:scale(0.87,1.04);">15</span>
<div class="b" style="left:531px;top:571.3px;width:28px;height:27.6px;border-radius:8.5px;background:#002998;box-shadow:1px 1.5px 2.5px rgba(40,30,10,0.65);"></div>
<span class="t" style="top:570.9px;height:28px;line-height:28px;font-size:14px;color:#fff;font-weight:bold;left:445.2px;width:200px;text-align:center;transform:scale(0.87,1.04);">16</span>
<span class="t" style="top:604px;height:28px;line-height:28px;font-size:17.7px;color:#002998;font-weight:bold;left:383.9px;letter-spacing:-0.119px;-webkit-text-stroke:0.3px #002998;">Observação</span>
<span class="t" style="top:604px;height:28px;line-height:28px;font-size:17.7px;color:#002998;font-weight:bold;left:493px;letter-spacing:0.418px;-webkit-text-stroke:0.3px #002998;">Vinc. movto</span>
</body></html>
